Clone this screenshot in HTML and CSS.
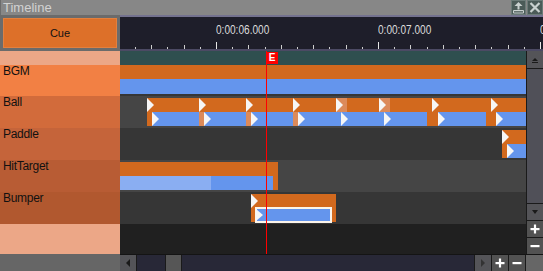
FILE: index.html
```html
<!DOCTYPE html>
<html lang="en">
<head>
    <meta charset="UTF-8">
    <title>Timeline</title>
    <link rel="stylesheet" href="styles.css">
</head>
<body>
    <div class="titlebar">
        <span class="title">Timeline</span>
        <div class="title-btns">
            <button class="tbtn first" title="Undock">
                <svg width="13" height="13" viewBox="0 0 13 13">
                    <polygon points="6.5,1 2.5,5 10.5,5" fill="#c9d1cf"/>
                    <rect x="5.5" y="5" width="2" height="3.5" fill="#c9d1cf"/>
                    <rect x="1.5" y="9" width="10" height="1.2" fill="#c9d1cf"/>
                    <polyline points="1.5,9.5 1.5,12 11.5,12 11.5,9.5" fill="none" stroke="#c9d1cf" stroke-width="1"/>
                </svg>
            </button>
            <button class="tbtn" title="Close">
                <svg width="14" height="13" viewBox="0 0 14 13">
                    <path d="M2.5 2 L11.5 11 M11.5 2 L2.5 11" stroke="#c9d1cf" stroke-width="2.2"/>
                </svg>
            </button>
        </div>
    </div>

    <div class="layout">
        <div class="cue-frame">
            <div class="cue-btn">Cue</div>
        </div>

        <div class="ruler">
            <span class="time" style="left:96px">0:00:06.000</span>
            <span class="time" style="left:258px">0:00:07.000</span>
            <span class="time" style="left:420px">0:00:08.000</span>
            <div class="ticks"></div>
        </div>

        <!-- track names -->
        <div class="labels">
            <div class="label-top"></div>
            <div class="label bgm">BGM</div>
            <div class="label ball">Ball</div>
            <div class="label paddle">Paddle</div>
            <div class="label hit">HitTarget</div>
            <div class="label bumper">Bumper</div>
            <div class="label-fill"></div>
        </div>

        <div class="body">
            <div class="tracks">
                <div class="marker-row"></div>

                <div class="track bgm dark">
                    <div class="lane"><span class="seg o" style="left:0;width:407px"></span></div>
                    <div class="lane"><span class="seg b" style="left:0;width:407px"></span></div>
                </div>

                <div class="track light">
                    <div class="lane">
                        <span class="seg o" style="left:27px;width:380px"></span>
                        <span class="seg lo" style="left:216px;width:11px"></span>
                        <span class="seg lo" style="left:259px;width:11px"></span>
                        <span class="tri" style="left:27px"></span>
                        <span class="tri" style="left:79px"></span>
                        <span class="tri" style="left:126px"></span>
                        <span class="tri" style="left:173px"></span>
                        <span class="tri" style="left:216px"></span>
                        <span class="tri" style="left:259px"></span>
                        <span class="tri" style="left:312px"></span>
                        <span class="tri" style="left:371px"></span>
                    </div>
                    <div class="lane">
                        <span class="seg o" style="left:27px;width:380px"></span>
                        <span class="seg lo" style="left:79px;width:5px"></span>
                        <span class="seg lo" style="left:126px;width:5px"></span>
                        <span class="seg lo" style="left:173px;width:5px"></span>
                        <span class="seg b" style="left:32px;width:47px"></span>
                        <span class="seg b" style="left:84px;width:42px"></span>
                        <span class="seg b" style="left:131px;width:42px"></span>
                        <span class="seg b" style="left:178px;width:129px"></span>
                        <span class="seg b" style="left:318px;width:48px"></span>
                        <span class="seg b" style="left:376px;width:31px"></span>
                        <span class="tri" style="left:32px"></span>
                        <span class="tri" style="left:84px"></span>
                        <span class="tri" style="left:131px"></span>
                        <span class="tri" style="left:178px"></span>
                        <span class="tri" style="left:221px"></span>
                        <span class="tri" style="left:264px"></span>
                        <span class="tri" style="left:318px"></span>
                        <span class="tri" style="left:376px"></span>
                    </div>
                </div>

                <div class="track dark">
                    <div class="lane">
                        <span class="seg o" style="left:382px;width:25px"></span>
                        <span class="tri" style="left:382px"></span>
                    </div>
                    <div class="lane">
                        <span class="seg o" style="left:382px;width:5px"></span>
                        <span class="seg b" style="left:387px;width:20px"></span>
                        <span class="tri" style="left:387px"></span>
                    </div>
                </div>

                <div class="track light hit">
                    <div class="lane"><span class="seg o" style="left:0;width:158px"></span></div>
                    <div class="lane">
                        <span class="seg lb" style="left:0;width:91px"></span>
                        <span class="seg b" style="left:91px;width:62px"></span>
                        <span class="seg o" style="left:153px;width:5px"></span>
                    </div>
                </div>

                <div class="track dark">
                    <div class="lane">
                        <span class="seg o" style="left:131px;width:85px"></span>
                        <span class="tri" style="left:131px"></span>
                    </div>
                    <div class="lane">
                        <span class="seg o" style="left:131px;width:85px"></span>
                        <span class="sel" style="left:135px;width:77px"></span>
                        <span class="tri sm" style="left:136px"></span>
                    </div>
                </div>

                <div class="playhead" style="left:146px"><span class="flag">E</span></div>
            </div>

            <div class="vscroll">
                <div class="sb-btn up"><span class="arr-up"></span></div>
                <div class="sb-track"></div>
                <div class="sb-btn"><span class="arr-down"></span></div>
                <div class="sb-btn zoom">
                    <svg width="10" height="10" viewBox="0 0 10 10"><rect x="0.5" y="4" width="9" height="2.2" fill="#fff"/><rect x="3.9" y="0.5" width="2.2" height="9" fill="#fff"/></svg>
                </div>
                <div class="sb-btn zoom">
                    <svg width="10" height="10" viewBox="0 0 10 10"><rect x="0.5" y="4" width="9" height="2.2" fill="#fff"/></svg>
                </div>
            </div>
        </div>

        <div class="foot-left"></div>
        <div class="hfoot">
            <div class="sb-btn"><span class="arr-left"></span></div>
            <div class="htrack"><span class="hthumb"></span></div>
            <div class="sb-btn"><span class="arr-right"></span></div>
            <div class="sb-btn zoom">
                <svg width="10" height="10" viewBox="0 0 10 10"><rect x="0.5" y="4" width="9" height="2.2" fill="#fff"/><rect x="3.9" y="0.5" width="2.2" height="9" fill="#fff"/></svg>
            </div>
            <div class="sb-btn zoom">
                <svg width="10" height="10" viewBox="0 0 10 10"><rect x="0.5" y="4" width="9" height="2.2" fill="#fff"/></svg>
            </div>
            <div class="corner"></div>
        </div>
    </div>
</body>
</html>
```

FILE: styles.css
```css
* {
    box-sizing: border-box;
}

body {
    margin: 0;
    width: 543px;
    height: 271px;
    overflow: hidden;
    background: #666;
    font-family: "Liberation Sans", Arial, sans-serif;
}

/* title bar */
.titlebar {
    height: 15px;
    display: flex;
    background: #878787;
    border-left: 1px solid #6c6c6c;
}

.title {
    flex: 1;
    padding-left: 2px;
    font-size: 13px;
    line-height: 16px;
    color: #d2d2d2;
}

.title-btns {
    display: flex;
    gap: 1px;
}

.tbtn {
    width: 16px;
    height: 15px;
    padding: 0;
    border: 1px solid #6b7b78;
    background: #4b5b58;
    display: flex;
    align-items: center;
    justify-content: center;
}

.tbtn.first {
    width: 15px;
}

/* main grid */
.layout {
    display: grid;
    grid-template-columns: 120px 1fr;
    grid-template-rows: 36px 203px 17px;
}

.cue-frame {
    background: #6b6b6b;
    padding: 3px;
}

.cue-btn {
    height: 100%;
    background: #dd7029;
    border: 1px solid #e3803e;
    display: flex;
    align-items: center;
    justify-content: center;
    font-size: 11px;
    color: #111;
}

.ruler {
    position: relative;
    background: #1e1e2a;
    border-top: 2px solid #74728f;
    border-bottom: 2px solid #4c4a64;
    overflow: hidden;
}

.time {
    position: absolute;
    top: 7px;
    font-size: 12px;
    line-height: 12px;
    color: #dcdcdc;
    white-space: nowrap;
    transform: scaleX(0.84);
    transform-origin: left;
}

.ticks {
    position: absolute;
    left: 0;
    right: 0;
    bottom: 0;
    height: 7px;
    background-image:
        linear-gradient(to right, #e6e6e6 0 1px, transparent 1px),
        repeating-linear-gradient(to right, #cfcfcf 0 1px, transparent 1px 32.4px),
        repeating-linear-gradient(to right, #cfcfcf 0 1px, transparent 1px 16.2px);
    background-size: 162px 7px, 162px 4px, 162px 2px;
    background-position: 96px 100%, 96px 100%, 96px 100%;
    background-repeat: repeat-x;
}

/* track names */
.labels {
    display: flex;
    flex-direction: column;
}

.label-top {
    height: 14px;
    background: #eca787;
}

.label {
    height: 32px;
    padding-left: 3px;
    font-size: 12px;
    line-height: 12px;
    letter-spacing: -0.3px;
    color: #111;
}

.label.bgm { height: 31px; background: #f28044; }
.label.ball { background: #d26b3b; }
.label.paddle { background: #c5643a; }
.label.hit { background: #b85c34; }
.label.bumper { background: #b1582f; }

.label-fill {
    flex: 1;
    background: #eca787;
}

/* tracks */
.body {
    display: flex;
    min-height: 0;
}

.tracks {
    flex: 1;
    position: relative;
    overflow: hidden;
    background: #202020;
}

.marker-row {
    height: 14px;
    background: #2f4f4f;
}

.track {
    height: 32px;
    padding: 2px 0;
}

.track.bgm {
    height: 31px;
    padding: 0;
}

.track.bgm .lane + .lane {
    height: 15px;
}

.track.dark { background: #363636; }
.track.light { background: #454545; }

.lane {
    position: relative;
    height: 14px;
}

.seg {
    position: absolute;
    top: 0;
    bottom: 0;
}

.o { background: #d2691e; }
.lo { background: #dc8a5a; }
.b { background: #6495ed; }
.lb { background: #8aaef2; }

.tri {
    position: absolute;
    top: 0;
    width: 0;
    height: 0;
    border-left: 7px solid #f6f6f6;
    border-top: 7px solid transparent;
    border-bottom: 7px solid transparent;
}

.tri.sm {
    top: 1px;
    border-top-width: 6px;
    border-bottom-width: 6px;
}

.sel {
    position: absolute;
    top: -1px;
    height: 16px;
    border: 2px solid #fbf4ea;
    background: #6495ed;
}

.playhead {
    position: absolute;
    top: 0;
    bottom: 0;
    width: 1px;
    background: #ff0000;
}

.flag {
    position: absolute;
    left: 0;
    top: 1px;
    width: 12px;
    height: 12px;
    background: #ff0000;
    color: #fff;
    font-size: 10px;
    font-weight: bold;
    line-height: 12px;
    text-align: center;
}

/* scrollbars */
.vscroll {
    width: 17px;
    display: flex;
    flex-direction: column;
    gap: 1px;
    background: #1a1a1a;
    border-left: 1px solid #1a1a1a;
}

.sb-btn {
    width: 16px;
    height: 16px;
    flex-shrink: 0;
    background: #545458;
    display: flex;
    flex-direction: column;
    align-items: center;
    justify-content: center;
}

.sb-btn.up {
    height: 17px;
}

.sb-btn.zoom {
    background: #525252;
}

.sb-track {
    flex: 1;
    background: #505058;
}

.arr-up {
    width: 0;
    height: 0;
    border-left: 3px solid transparent;
    border-right: 3px solid transparent;
    border-bottom: 3px solid #1a1a1a;
    margin-bottom: 1px;
}

.arr-up::after {
    content: "";
    display: block;
    width: 6px;
    height: 1px;
    margin: 4px 0 0 -3px;
    background: #1a1a1a;
}

.arr-down {
    width: 0;
    height: 0;
    border-left: 3px solid transparent;
    border-right: 3px solid transparent;
    border-top: 4px solid #1a1a1a;
}

.arr-left {
    width: 0;
    height: 0;
    border-top: 4px solid transparent;
    border-bottom: 4px solid transparent;
    border-right: 4px solid #1a1a1a;
}

.arr-right {
    width: 0;
    height: 0;
    border-top: 4px solid transparent;
    border-bottom: 4px solid transparent;
    border-left: 4px solid #333;
}

.foot-left {
    background: #666;
}

.hfoot {
    display: flex;
    gap: 1px;
    background: #1a1a1a;
    border-top: 1px solid #141414;
}

.hfoot .sb-btn {
    height: 16px;
}

.htrack {
    flex: 1;
    position: relative;
    background: #282837;
}

.hthumb {
    position: absolute;
    top: 0;
    bottom: 0;
    left: 28px;
    width: 17px;
    background: #565656;
    border-left: 1px solid #1a1a1a;
    border-right: 1px solid #1a1a1a;
}

.corner {
    width: 17px;
    background: #666;
}
```
